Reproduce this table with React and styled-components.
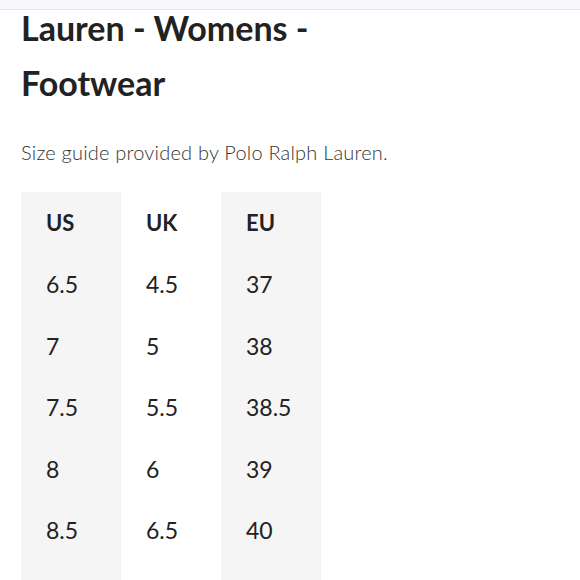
import React from 'react';
import styled, { createGlobalStyle } from 'styled-components';

const Global = createGlobalStyle`
  body {
    margin: 0;
    background: #fff;
    font-family: Lato, "Liberation Sans", sans-serif;
    color: #222;
  }
`;

const TopBar = styled.div`
  height: 9px;
  background: #f8f8fc;
  border-bottom: 1px solid #e4e4e8;
`;

const Page = styled.div`
  padding: 0 21px;
`;

const Title = styled.h1`
  margin: -10px 0 0;
  font-size: 34px;
  line-height: 55px;
  font-weight: 700;
  color: #222;
  width: 330px;
`;

const Note = styled.p`
  margin: 28px 0 0;
  font-size: 20px;
  line-height: 28px;
  font-weight: 300;
  letter-spacing: 0.2px;
  color: #333;
`;

const Table = styled.div`
  display: flex;
  margin-top: 26px;
`;

const Column = styled.div`
  width: 100px;
  padding-bottom: 40px;
  background: ${p => (p.$shaded ? '#f5f5f5' : '#fff')};
`;

const Cell = styled.div`
  height: 61.5px;
  display: flex;
  align-items: center;
  padding-left: 25px;
  font-size: ${p => (p.$head ? '22px' : '23px')};
  font-weight: ${p => (p.$head ? 700 : 400)};
  color: #222;
`;

const columns = [
  { head: 'US', values: ['6.5', '7', '7.5', '8', '8.5'] },
  { head: 'UK', values: ['4.5', '5', '5.5', '6', '6.5'] },
  { head: 'EU', values: ['37', '38', '38.5', '39', '40'] },
];

const App = () => (
  <>
    <Global />
    <TopBar />
    <Page>
      <Title>Lauren - Womens - Footwear</Title>
      <Note>Size guide provided by Polo Ralph Lauren.</Note>
      <Table>
        {columns.map((col, i) => (
          <Column key={col.head} $shaded={i % 2 === 0}>
            <Cell $head>{col.head}</Cell>
            {col.values.map(v => (
              <Cell key={v}>{v}</Cell>
            ))}
          </Column>
        ))}
      </Table>
    </Page>
  </>
);

export default App;
